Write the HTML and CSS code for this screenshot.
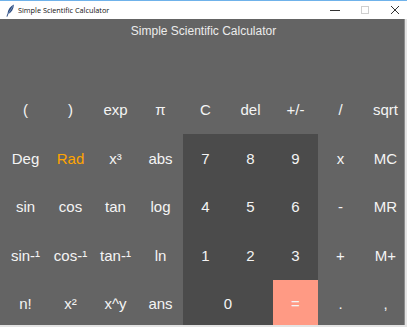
FILE: index.html
```html
<!DOCTYPE html>
<html lang="en">
<head>
    <meta charset="UTF-8">
    <meta name="viewport" content="width=device-width, initial-scale=1.0">
    <title>Simple Scientific Calculator</title>
    <link rel="stylesheet" href="styles.css">
</head>
<body>
    <div class="window">
        <div class="titlebar">
            <svg class="app-icon" width="10" height="13" viewBox="0 0 10 13">
                <path d="M9 0.5 C5.5 2 3 5.5 2.6 9.5 L1.4 12.6 L2.3 12.8 L3.4 10 C6.5 8.5 8.6 5 9 0.5 Z" fill="#2d4d80"/>
                <path d="M8.4 1.6 L3 10" stroke="#9fb6da" stroke-width="0.6"/>
            </svg>
            <span class="window-title">Simple Scientific Calculator</span>
            <div class="controls">
                <svg width="12" height="12" viewBox="0 0 12 12"><path d="M1 6.5 H11" stroke="#333" stroke-width="1"/></svg>
                <svg width="12" height="12" viewBox="0 0 12 12"><rect x="2.5" y="2.5" width="7" height="7" fill="none" stroke="#cfcfcf" stroke-width="1"/></svg>
                <svg width="12" height="12" viewBox="0 0 12 12"><path d="M2 2 L10 10 M10 2 L2 10" stroke="#333" stroke-width="1"/></svg>
            </div>
        </div>

        <div class="app">
            <div class="screen">
                <h1>Simple Scientific Calculator</h1>
            </div>
            <div class="keys">
                <button>(</button>
                <button>)</button>
                <button>exp</button>
                <button>π</button>
                <button>C</button>
                <button>del</button>
                <button>+/-</button>
                <button>/</button>
                <button>sqrt</button>

                <button>Deg</button>
                <button class="active">Rad</button>
                <button>x³</button>
                <button>abs</button>
                <button class="num">7</button>
                <button class="num">8</button>
                <button class="num">9</button>
                <button>x</button>
                <button>MC</button>

                <button>sin</button>
                <button>cos</button>
                <button>tan</button>
                <button>log</button>
                <button class="num">4</button>
                <button class="num">5</button>
                <button class="num">6</button>
                <button>-</button>
                <button>MR</button>

                <button>sin-¹</button>
                <button>cos-¹</button>
                <button>tan-¹</button>
                <button>ln</button>
                <button class="num">1</button>
                <button class="num">2</button>
                <button class="num">3</button>
                <button>+</button>
                <button>M+</button>

                <button>n!</button>
                <button>x²</button>
                <button>x^y</button>
                <button>ans</button>
                <button class="num zero">0</button>
                <button class="equals">=</button>
                <button>.</button>
                <button>,</button>
            </div>
        </div>
    </div>
</body>
</html>
```

FILE: styles.css
```css
body {
    margin: 0;
    padding: 0;
    font-family: "Liberation Sans", Arial, sans-serif;
    background-color: #e4e4e4;
}
.window {
    width: 407px;
    height: 327px;
    display: flex;
    flex-direction: column;
    background-color: #e4e4e4;
    overflow: hidden;
}
.titlebar {
    height: 18px;
    border-top: 1px solid #6fb2ea;
    background-color: white;
    display: flex;
    align-items: center;
    flex-shrink: 0;
}
.app-icon {
    margin-left: 5px;
    margin-right: 3px;
}
.window-title {
    font-family: "Open Sans", "Noto Sans", sans-serif;
    font-size: 7.3px;
    color: #111;
}
.controls {
    margin-left: auto;
    display: flex;
    gap: 18px;
    margin-right: 6px;
}
.app {
    flex: 1;
    margin: 0 2px 2px 0;
    border-right: 1px solid #8c8c8c;
    background-color: #646464;
    padding-left: 3px;
    overflow: hidden;
}
.screen {
    height: 66.5px;
    box-sizing: border-box;
    padding-top: 4px;
}
h1 {
    margin: 0;
    font-size: 12px;
    font-weight: normal;
    line-height: 16px;
    text-align: center;
    color: #ececec;
}
.keys {
    display: grid;
    grid-template-columns: repeat(9, 45px);
    grid-template-rows: repeat(5, 48.5px);
}
.keys button {
    border: none;
    padding: 0;
    margin: 0;
    background-color: transparent;
    color: #f4f4f4;
    font-family: "Liberation Sans", Arial, sans-serif;
    font-size: 15px;
    cursor: pointer;
}
.keys .num {
    background-color: #4b4b4b;
}
.keys .zero {
    grid-column: span 2;
}
.keys .equals {
    background-color: #ff9a84;
}
.keys .active {
    color: #ffa500;
}
```
